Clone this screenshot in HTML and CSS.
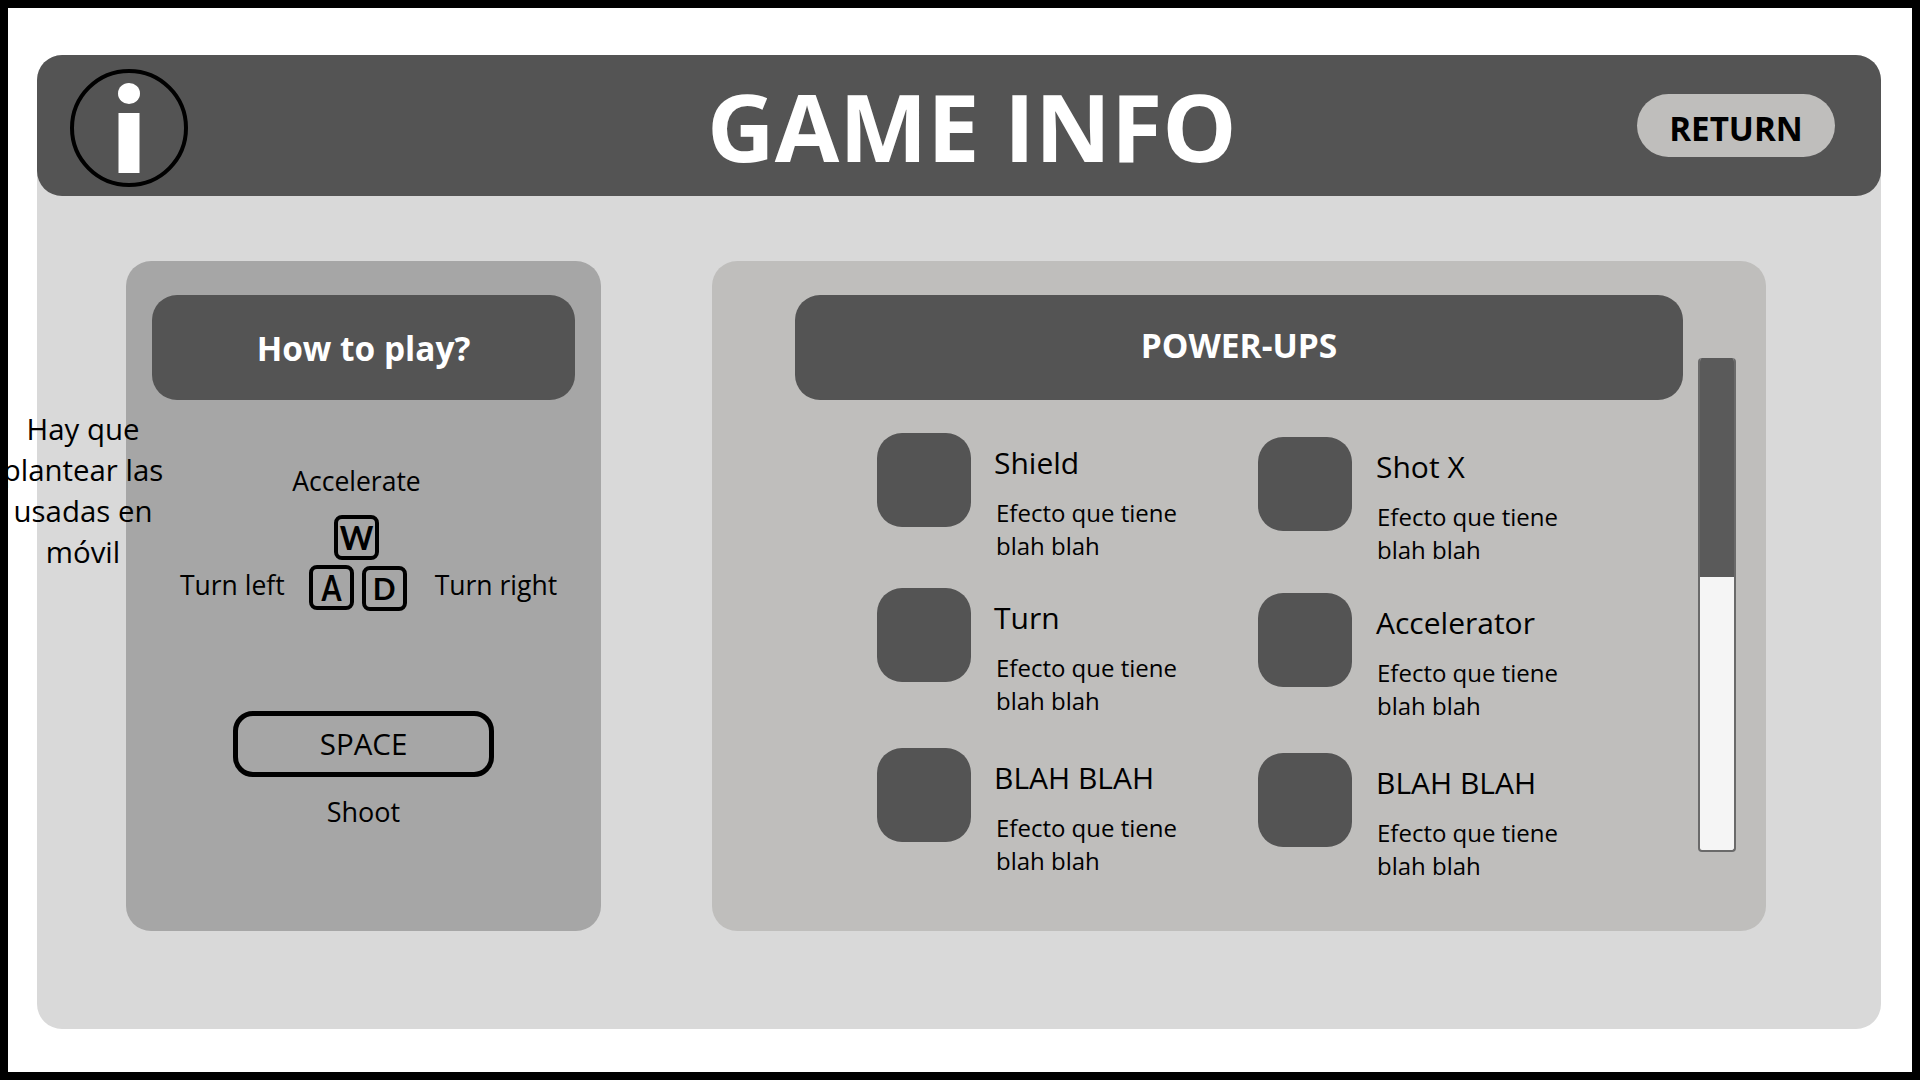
FILE: index.html
```html
<!DOCTYPE html>
<html lang="en">
<head>
    <meta charset="UTF-8">
    <meta name="viewport" content="width=device-width, initial-scale=1.0">
    <title>Game Info</title>
    <link rel="stylesheet" href="styles.css">
</head>
<body>
    <div class="frame">
        <div class="panel">
            <header class="panel-head">
                <svg class="info-icon" width="118" height="118" viewBox="0 0 118 118">
                    <circle cx="59" cy="59" r="57" fill="none" stroke="#000" stroke-width="4"/>
                    <ellipse cx="59" cy="24.5" rx="11" ry="10.5" fill="#fff"/>
                    <rect x="48.500" y="44" width="21" height="60" fill="#fff"/>
                </svg>
                <h1 class="title">GAME INFO</h1>
                <button class="return-btn" type="button">RETURN</button>
            </header>

            <div class="panel-body">
                <section class="howto">
                    <h2 class="howto-head">How to play?</h2>
                    <div class="label accelerate">Accelerate</div>
                    <div class="controls">
                        <span class="label turn">Turn left</span>
                        <div class="keys">
                            <div class="key key-w">W</div>
                            <div class="keys-row">
                                <div class="key key-a"><span>A</span></div>
                                <div class="key key-d">D</div>
                            </div>
                        </div>
                        <span class="label turn">Turn right</span>
                    </div>
                    <div class="space-key">SPACE</div>
                    <div class="label shoot">Shoot</div>
                </section>

                <section class="powerups">
                    <div class="powerups-main">
                        <h2 class="powerups-head">POWER-UPS</h2>
                        <div class="power-grid">
                            <div class="power-col">
                                <div class="power-item">
                                    <div class="power-icon"></div>
                                    <div class="power-text">
                                        <h3>Shield</h3>
                                        <p>Efecto que tiene<br>blah blah</p>
                                    </div>
                                </div>
                                <div class="power-item">
                                    <div class="power-icon"></div>
                                    <div class="power-text">
                                        <h3>Turn</h3>
                                        <p>Efecto que tiene<br>blah blah</p>
                                    </div>
                                </div>
                                <div class="power-item">
                                    <div class="power-icon"></div>
                                    <div class="power-text">
                                        <h3>BLAH BLAH</h3>
                                        <p>Efecto que tiene<br>blah blah</p>
                                    </div>
                                </div>
                            </div>
                            <div class="power-col col-b">
                                <div class="power-item">
                                    <div class="power-icon"></div>
                                    <div class="power-text">
                                        <h3>Shot X</h3>
                                        <p>Efecto que tiene<br>blah blah</p>
                                    </div>
                                </div>
                                <div class="power-item">
                                    <div class="power-icon"></div>
                                    <div class="power-text">
                                        <h3>Accelerator</h3>
                                        <p>Efecto que tiene<br>blah blah</p>
                                    </div>
                                </div>
                                <div class="power-item">
                                    <div class="power-icon"></div>
                                    <div class="power-text">
                                        <h3>BLAH BLAH</h3>
                                        <p>Efecto que tiene<br>blah blah</p>
                                    </div>
                                </div>
                            </div>
                        </div>
                    </div>
                    <div class="scrollbar">
                        <div class="scroll-thumb"></div>
                    </div>
                </section>
            </div>
        </div>

        <!-- note left on the mockup -->
        <div class="note">Hay que plantear las usadas en móvil</div>
    </div>
</body>
</html>
```

FILE: styles.css
```css
* {
    box-sizing: border-box;
}

body {
    margin: 0;
    font-family: "Open Sans", sans-serif;
    color: #000;
    background-color: #fff;
}

h1, h2, h3, p {
    margin: 0;
}

.frame {
    position: relative;
    width: 1920px;
    height: 1080px;
    padding: 47px 31px 43px 28.500px;
    border: 8px solid #000;
    background-color: #fff;
    overflow: hidden;
}

.panel {
    height: 974px;
    background-color: #d9d9d9;
    border-radius: 25px;
}

/* top bar */
.panel-head {
    display: flex;
    align-items: center;
    height: 141px;
    padding: 0 46px 0 33.500px;
    background-color: #545454;
    border-radius: 25px;
}

.info-icon {
    flex: none;
    margin-top: 5px;
}

.title {
    margin-left: 519px;
    font-size: 93.500px;
    font-weight: 700;
    line-height: 1;
    color: #fff;
}

.return-btn {
    margin-left: auto;
    width: 198px;
    height: 63px;
    padding: 5px 0 0;
    border: none;
    border-radius: 32px;
    background-color: #bfbebc;
    font-family: inherit;
    font-size: 33.200px;
    font-weight: 700;
    color: #000;
}

.panel-body {
    display: flex;
    gap: 110.500px;
    padding: 65px 0 0 89.500px;
}

/* how to play card */
.howto {
    display: flex;
    flex-direction: column;
    align-items: center;
    width: 475px;
    height: 670px;
    padding: 34px 26px 0;
    background-color: #a6a6a6;
    border-radius: 25px;
}

.howto-head {
    width: 100%;
    height: 105px;
    background-color: #545454;
    border-radius: 25px;
    font-size: 33.400px;
    font-weight: 700;
    line-height: 107px;
    text-align: center;
    color: #fff;
}

.label {
    font-size: 26.500px;
    line-height: 36px;
}

.accelerate {
    margin-top: 63px;
    margin-left: -14px;
}

.controls {
    display: flex;
    align-items: flex-end;
    gap: 26px;
    margin-top: 16px;
    margin-left: 10px;
}

.turn {
    margin-bottom: 8px;
    white-space: nowrap;
}

.keys {
    display: flex;
    flex-direction: column;
    align-items: center;
    gap: 5px;
    margin: 0 2px 0 -2px;
}

.keys-row {
    display: flex;
    gap: 8px;
}

.key {
    width: 45px;
    height: 45px;
    border: 4px solid #000;
    border-radius: 8px;
    font-family: "Lato", sans-serif;
    font-size: 32px;
    font-weight: 700;
    line-height: 37px;
    text-align: center;
}

.key-w {
    margin-left: -2px;
}

.key-a span {
    display: block;
    font-size: 36px;
    transform: scaleX(0.8);
}

.key-d {
    margin-top: 1px;
    font-size: 30px;
}

.space-key {
    width: 261px;
    height: 66px;
    margin-top: 100px;
    border: 5px solid #000;
    border-radius: 20px;
    font-size: 29.500px;
    line-height: 56px;
    text-align: center;
}

.shoot {
    margin-top: 17px;
    font-size: 27px;
}

/* power-ups card */
.powerups {
    display: flex;
    gap: 15px;
    width: 1054.500px;
    height: 670px;
    padding: 34px 0 0 83.500px;
    background-color: #bfbebc;
    border-radius: 25px;
}

.powerups-main {
    width: 888px;
}

.powerups-head {
    height: 105px;
    background-color: #545454;
    border-radius: 25px;
    font-size: 33.500px;
    font-weight: 700;
    line-height: 101px;
    text-align: center;
    color: #fff;
}

.power-grid {
    display: flex;
    padding: 33px 0 0 82px;
}

.power-col {
    display: flex;
    flex-direction: column;
    gap: 26px;
    width: 381px;
}

.power-col .power-item:last-child {
    margin-top: 5px;
}

.col-b {
    padding-top: 4px;
}

.col-b .power-item:nth-child(2) {
    margin-top: 1px;
}

.col-b .power-text h3 {
    margin-left: 1px;
}

.power-item {
    display: flex;
    gap: 23px;
}

.power-icon {
    flex: none;
    width: 94px;
    height: 94px;
    background-color: #545454;
    border-radius: 25px;
}

.power-text {
    padding-top: 10px;
}

.power-text h3 {
    font-size: 30px;
    font-weight: 400;
    line-height: 40px;
}

.power-text p {
    margin-top: 13px;
    margin-left: 2px;
    font-size: 24px;
    line-height: 33px;
}

.scrollbar {
    width: 38px;
    height: 494px;
    margin-top: 63px;
    background-color: #f5f5f5;
    border: 2px solid #6a6a6a;
    border-top: none;
    border-radius: 4px;
    overflow: hidden;
}

.scroll-thumb {
    height: 219px;
    margin: 0 -2px;
    background-color: #5a5a5a;
}

/* annotation sits over the panels */
.note {
    position: absolute;
    left: -7px;
    top: 401px;
    width: 164px;
    font-size: 29.400px;
    line-height: 41px;
    text-align: center;
}
```
